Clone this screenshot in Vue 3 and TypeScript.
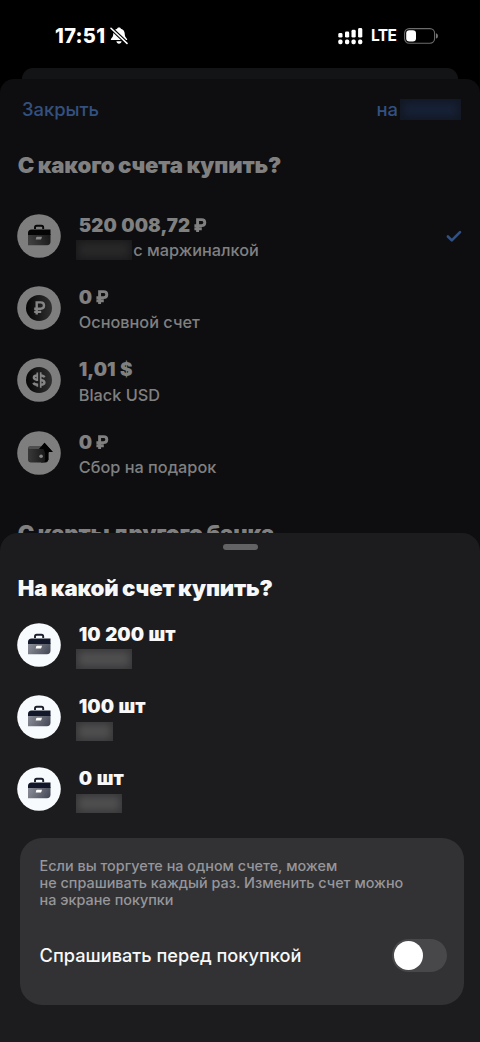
<script setup lang="ts">
import { ref } from 'vue'

type IconName = 'case' | 'ruble' | 'dollar' | 'wallet'

interface Account {
  icon: IconName
  amount: string
  currency?: 'rub'
  name?: string
  hiddenWidth?: number
  selected?: boolean
}

const sources: Account[] = [
  { icon: 'case', amount: '520 008,72', currency: 'rub', name: 'с маржиналкой', hiddenWidth: 56, selected: true },
  { icon: 'ruble', amount: '0', currency: 'rub', name: 'Основной счет' },
  { icon: 'dollar', amount: '1,01 $', name: 'Black USD' },
  { icon: 'wallet', amount: '0', currency: 'rub', name: 'Сбор на подарок' },
]

const targets: Account[] = [
  { icon: 'case', amount: '10 200 шт', hiddenWidth: 56 },
  { icon: 'case', amount: '100 шт', hiddenWidth: 37 },
  { icon: 'case', amount: '0 шт', hiddenWidth: 46 },
]

const askBeforeBuy = ref(false)
</script>

<template>
  <div class="screen">
    <header class="status">
      <span class="time">17:51</span>
      <svg class="bell" width="18" height="18" viewBox="0 0 18 18">
        <path d="M9 .4c1 0 1.700.5 1.900 1.300 2.500.8 3.700 2.500 3.800 4.900.1 2.300.5 3.600 2.300 5.300.4.400.1 1.200-.5 1.200H1.500c-.6 0-.9-.8-.5-1.200C2.800 10.200 3.200 8.900 3.300 6.600c.1-2.400 1.300-4.100 3.800-4.900C7.300.9 8 .4 9 .4zM6.400 14.200h5.200c-.2 1.500-1.200 2.500-2.600 2.500s-2.400-1-2.600-2.500z" fill="#fff" />
        <path d="M1.200 1.400l15.600 14.800" stroke="#000" stroke-width="3.600" />
        <path d="M1 1.200l16 15.200" stroke="#fff" stroke-width="1.500" stroke-linecap="round" />
      </svg>
      <svg class="signal" width="26" height="18" viewBox="0 0 26 18" fill="#fff">
        <rect x="0.300" y="6" width="4.200" height="4.600" rx="1.400" />
        <rect x="7" y="4.600" width="4.200" height="6" rx="1.400" />
        <rect x="13.500" y="2.800" width="4.200" height="7.800" rx="1.400" />
        <rect x="20.100" y="1" width="4.200" height="9.600" rx="1.400" />
        <rect x="0.300" y="12.600" width="4.200" height="4.600" rx="1.600" />
        <rect x="7" y="12.600" width="4.200" height="4.600" rx="1.600" />
        <rect x="13.500" y="12.600" width="4.200" height="4.600" rx="1.600" />
        <rect x="20.100" y="12.600" width="4.200" height="4.600" rx="1.600" />
      </svg>
      <span class="lte">LTE</span>
      <svg class="battery" width="35" height="16" viewBox="0 0 35 16">
        <rect x="0.600" y="0.600" width="30" height="14.600" rx="4.600" fill="none" stroke="#6c6c6c" stroke-width="1.100" />
        <path d="M32 5.300c1.300.4 1.900 1.300 1.900 2.600s-.6 2.200-1.900 2.600z" fill="#777" />
        <rect x="2.200" y="2.300" width="9.800" height="11.200" rx="3.200" fill="#fff" />
      </svg>
    </header>

    <div class="peek"></div>

    <main class="page">
      <nav class="bar">
        <span class="close">Закрыть</span>
        <span class="to">на</span>
        <i class="mask mask-blue"></i>
      </nav>
      <h1 class="heading dim">С какого счета купить?</h1>
      <ul class="list sources">
        <li v-for="(a, i) in sources" :key="i" class="row">
          <span class="avatar">
            <svg v-if="a.icon === 'case'" viewBox="0 0 44 44">
              <defs>
                <linearGradient id="dimCase" x1="0" y1="0.500" x2="1" y2="0.300">
                  <stop offset="0" stop-color="#404040" />
                  <stop offset="1" stop-color="#191919" />
                </linearGradient>
              </defs>
              <circle cx="22" cy="22" r="21.800" fill="#7e7e7e" />
              <path d="M18 15v-1.600c0-1.200.6-1.700 1.700-1.700h4.800c1.100 0 1.700.5 1.700 1.700V15" fill="none" stroke="#070708" stroke-width="1.900" />
              <path d="M11 20h22.500v7.800c0 2.300-1.200 3.500-3.500 3.500H11z" fill="url(#dimCase)" />
              <path d="M11 21v-2c0-2.300 1.300-3.600 3.600-3.600h18.900V21z" fill="#050506" />
              <path d="M20 22.800h5l-.7 2.100c-.2.500-.5.700-1 .7h-4.600l.5-2.100c.1-.5.300-.7.800-.7z" fill="#898989" />
            </svg>
            <svg v-else-if="a.icon === 'wallet'" viewBox="0 0 44 44">
              <defs>
                <linearGradient id="dimWallet">
                  <stop offset="0" stop-color="#393939" />
                  <stop offset="1" stop-color="#181818" />
                </linearGradient>
              </defs>
              <circle cx="22" cy="22" r="21.800" fill="#7e7e7e" />
              <path d="M11 17.200c0-1.400.9-2.200 2.300-2.200H24v4H11z" fill="#4e4e4e" />
              <path d="M24 18h7.200v10.500c0 2-1 3-3 3H24z" fill="#060606" />
              <path d="M27.500 11.700l8.300 9.400h-4.300V29l-4 2.200v-9.900H21z" fill="#020202" />
              <path d="M11 16.900c.5.900 1.300 1.100 2.400 1.100h12.200c1.700 0 2.500.8 2.500 2.500v8.300c0 1.700-.9 2.600-2.600 2.600H14c-2 0-3-1-3-3z" fill="url(#dimWallet)" />
              <path d="M27.500 11.700l8.300 9.400h-4.300V22h-3.400L26.600 18h-4.700z" fill="#020202" />
              <circle cx="24.100" cy="25.300" r="1.800" fill="#858585" />
            </svg>
            <svg v-else viewBox="0 0 44 44">
              <defs>
                <linearGradient id="dimCoin">
                  <stop offset="0" stop-color="#060606" />
                  <stop offset="1" stop-color="#303030" />
                </linearGradient>
              </defs>
              <circle cx="22" cy="22" r="21.800" fill="#7e7e7e" />
              <circle cx="22" cy="22" r="13" fill="url(#dimCoin)" />
              <g v-if="a.icon === 'ruble'" fill="none" stroke="#858585" stroke-width="2.400">
                <path d="M19.700 28.600V16.400h4c2.200 0 3.300 1.200 3.300 3.100s-1.100 3.200-3.300 3.200h-6.500M17.200 25.900h7" />
              </g>
              <g v-else fill="none" stroke="#858585" stroke-width="2.500">
                <path d="M20.300 17.400c-2.200 0-3.400.7-3.400 2.100 0 1.600 1.200 2 3.400 2.500M20.300 26.700c-2.200 0-3.300-.6-3.800-1.900M23.700 17.400c2.300 0 3.200.7 3.700 2M23.700 22c2.300.4 3.700 1.100 3.700 2.500 0 1.500-1.400 2.200-3.700 2.200" />
                <path d="M20.300 14.400v8.500M20.300 25.500v3.200M23.700 14.200v15.600" stroke-width="1.700" />
              </g>
            </svg>
          </span>
          <span class="info">
            <span class="amount">{{ a.amount }}<svg v-if="a.currency" class="rub" width="13" height="14" viewBox="0 0 13 14"><path d="M3.600 14V1.600h3.900c2.200 0 3.300 1.100 3.300 2.900S9.700 7.600 7.500 7.600H.4M.4 10.800h7.400" fill="none" stroke="currentColor" stroke-width="2.900" /></svg></span>
            <span class="name"><i v-if="a.hiddenWidth" class="mask mask-dim" :style="{ width: a.hiddenWidth + 'px' }"></i><span>{{ a.name }}</span></span>
          </span>
          <svg v-if="a.selected" class="check" width="16" height="14" viewBox="0 0 16 14"><path d="M1.900 7.500l3.900 3.900L14 3.100" fill="none" stroke="#335180" stroke-width="2.600" stroke-linecap="round" stroke-linejoin="round" /></svg>
        </li>
      </ul>
      <h2 class="heading dim other">С карты другого банка</h2>
    </main>

    <section class="sheet">
      <div class="grabber"></div>
      <h2 class="heading bright">На какой счет купить?</h2>
      <ul class="list targets">
        <li v-for="(a, i) in targets" :key="i" class="row">
          <span class="avatar">
            <svg viewBox="0 0 44 44">
              <defs>
                <linearGradient id="case" x1="0" y1="0.300" x2="1" y2="0.600">
                  <stop offset="0" stop-color="#898c96" />
                  <stop offset="1" stop-color="#484c59" />
                </linearGradient>
              </defs>
              <circle cx="22" cy="22" r="21.800" fill="#f8fbfd" />
              <path d="M18 15v-1.600c0-1.200.6-1.700 1.700-1.700h4.800c1.100 0 1.700.5 1.700 1.700V15" fill="none" stroke="#1b1f2c" stroke-width="1.900" />
              <path d="M11 20h22.500v7.800c0 2.300-1.200 3.500-3.500 3.500H11z" fill="url(#case)" />
              <path d="M11 21v-2c0-2.300 1.300-3.600 3.600-3.600h18.900V21z" fill="#12182a" />
              <path d="M20 22.800h5l-.7 2.100c-.2.500-.5.700-1 .7h-4.600l.5-2.100c.1-.5.300-.7.800-.7z" fill="#fff" />
            </svg>
          </span>
          <span class="info">
            <span class="amount">{{ a.amount }}</span>
            <span class="name"><i class="mask" :style="{ width: a.hiddenWidth + 'px' }"></i></span>
          </span>
        </li>
      </ul>

      <div class="card">
        <p class="hint">Если вы торгуете на одном счете, можем<br />не спрашивать каждый раз. Изменить счет можно<br />на экране покупки</p>
        <div class="setting">
          <span class="question">Спрашивать перед покупкой</span>
          <button class="switch" :class="{ on: askBeforeBuy }" type="button" aria-label="Спрашивать перед покупкой" @click="askBeforeBuy = !askBeforeBuy"><i></i></button>
        </div>
      </div>
    </section>
  </div>
</template>

<style>
body {
  margin: 0;
  background: #000;
}
</style>

<style scoped>
.screen {
  width: 480px;
  height: 1042px;
  overflow: hidden;
  display: flex;
  flex-direction: column;
  background: #000;
  font-family: Inter, "Liberation Sans", sans-serif;
  white-space: nowrap;
}
.status {
  height: 67.5px;
  flex: none;
  display: flex;
  align-items: center;
  box-sizing: border-box;
  padding: 4px 41.500px 0 55px;
  color: #fff;
}
.time {
  width: 54.500px;
  font-size: 20px;
  font-weight: 800;
  letter-spacing: 0.300px;
}
.signal {
  margin-left: auto;
}
.lte {
  width: 26.500px;
  margin: 0 6px 0 7.500px;
  font-size: 15.500px;
  font-weight: 700;
  letter-spacing: -0.600px;
}
.peek {
  flex: none;
  height: 11px;
  margin: 0 22px;
  border-radius: 11px 11px 0 0;
  background: #131415;
}
.page {
  flex: none;
  height: 480px;
  border-radius: 14px 14px 0 0;
  background: #0e0e10;
  box-sizing: border-box;
  padding-top: 17.500px;
}
.bar {
  display: flex;
  align-items: center;
  height: 26px;
  padding: 0 19px 0 22px;
  color: #335180;
  font-size: 18.400px;
  font-weight: 500;
}
.to {
  margin-left: auto;
  margin-right: 2px;
}
.heading {
  margin: 0;
  padding-left: 17.700px;
  height: 28px;
  line-height: 28px;
  font-size: 22.200px;
  font-weight: 900;
  letter-spacing: -0.150px;
  word-spacing: -0.700px;
}
.dim {
  margin-top: 29px;
  color: #808081;
}
.list {
  list-style: none;
  margin: 0;
  padding: 0 18px 0 17px;
}
.sources {
  margin-top: 34.600px;
  color: #808081;
}
.row {
  display: flex;
  height: 72.330px;
}
.avatar {
  flex: none;
  width: 44px;
  height: 44px;
  padding-left: 0.300px;
}
.avatar svg {
  display: block;
  width: 44px;
  height: 44px;
}
.info {
  display: flex;
  flex-direction: column;
  margin-left: 17.500px;
}
.amount {
  height: 24px;
  line-height: 23px;
  font-size: 18.800px;
  font-weight: 900;
  word-spacing: 0.800px;
}
.rub {
  margin-left: 4px;
}
.name {
  display: flex;
  align-items: center;
  height: 25px;
  font-size: 16.300px;
  font-weight: 500;
}
.mask {
  flex: none;
  height: 19.500px;
  margin-left: -3.300px;
  background: #505051;
  box-shadow: inset 0 0 9px 2px #343436;
}
.mask-dim {
  margin-right: 1.800px;
  background: #29292a;
  box-shadow: inset 0 0 9px 2px #18181a;
}
.mask-blue {
  width: 61px;
  height: 21px;
  margin-left: 0;
  background: #172237;
  box-shadow: inset 0 0 8px 3px #121722;
}
.check {
  margin: 15px 0 0 auto;
}
.other {
  margin-top: 16.100px;
}
.sheet {
  position: relative;
  flex: 1;
  margin-top: -25.500px;
  border-radius: 18px 18px 0 0;
  background: #1c1c1e;
  box-sizing: border-box;
  padding-top: 10.500px;
}
.grabber {
  width: 35px;
  height: 6px;
  margin: 0 auto;
  border-radius: 3px;
  background: #636365;
}
.bright {
  margin-top: 24px;
  color: #f8f8f9;
}
.targets {
  margin-top: 21px;
  color: #f8f8f9;
}
.card {
  box-sizing: border-box;
  width: 444.500px;
  height: 167px;
  margin: -1.500px 0 0 19.800px;
  padding: 19px 17.500px 0 19.800px;
  border-radius: 22px;
  background: #323234;
}
.hint {
  margin: 0;
  color: #96969b;
  font-size: 14.400px;
  line-height: 17px;
  font-weight: 500;
}
.setting {
  display: flex;
  align-items: center;
  justify-content: space-between;
  margin-top: 30.700px;
}
.question {
  color: #f8f8f9;
  font-size: 18.200px;
  font-weight: 500;
}
.switch {
  width: 54.500px;
  height: 33.500px;
  padding: 2px 1.500px;
  border: 0;
  border-radius: 17px;
  background: #48484a;
}
.switch i {
  display: block;
  width: 29.500px;
  height: 29.500px;
  border-radius: 50%;
  background: #fff;
}
.switch.on {
  background: #34c759;
}
.switch.on i {
  margin-left: 21px;
}
</style>
